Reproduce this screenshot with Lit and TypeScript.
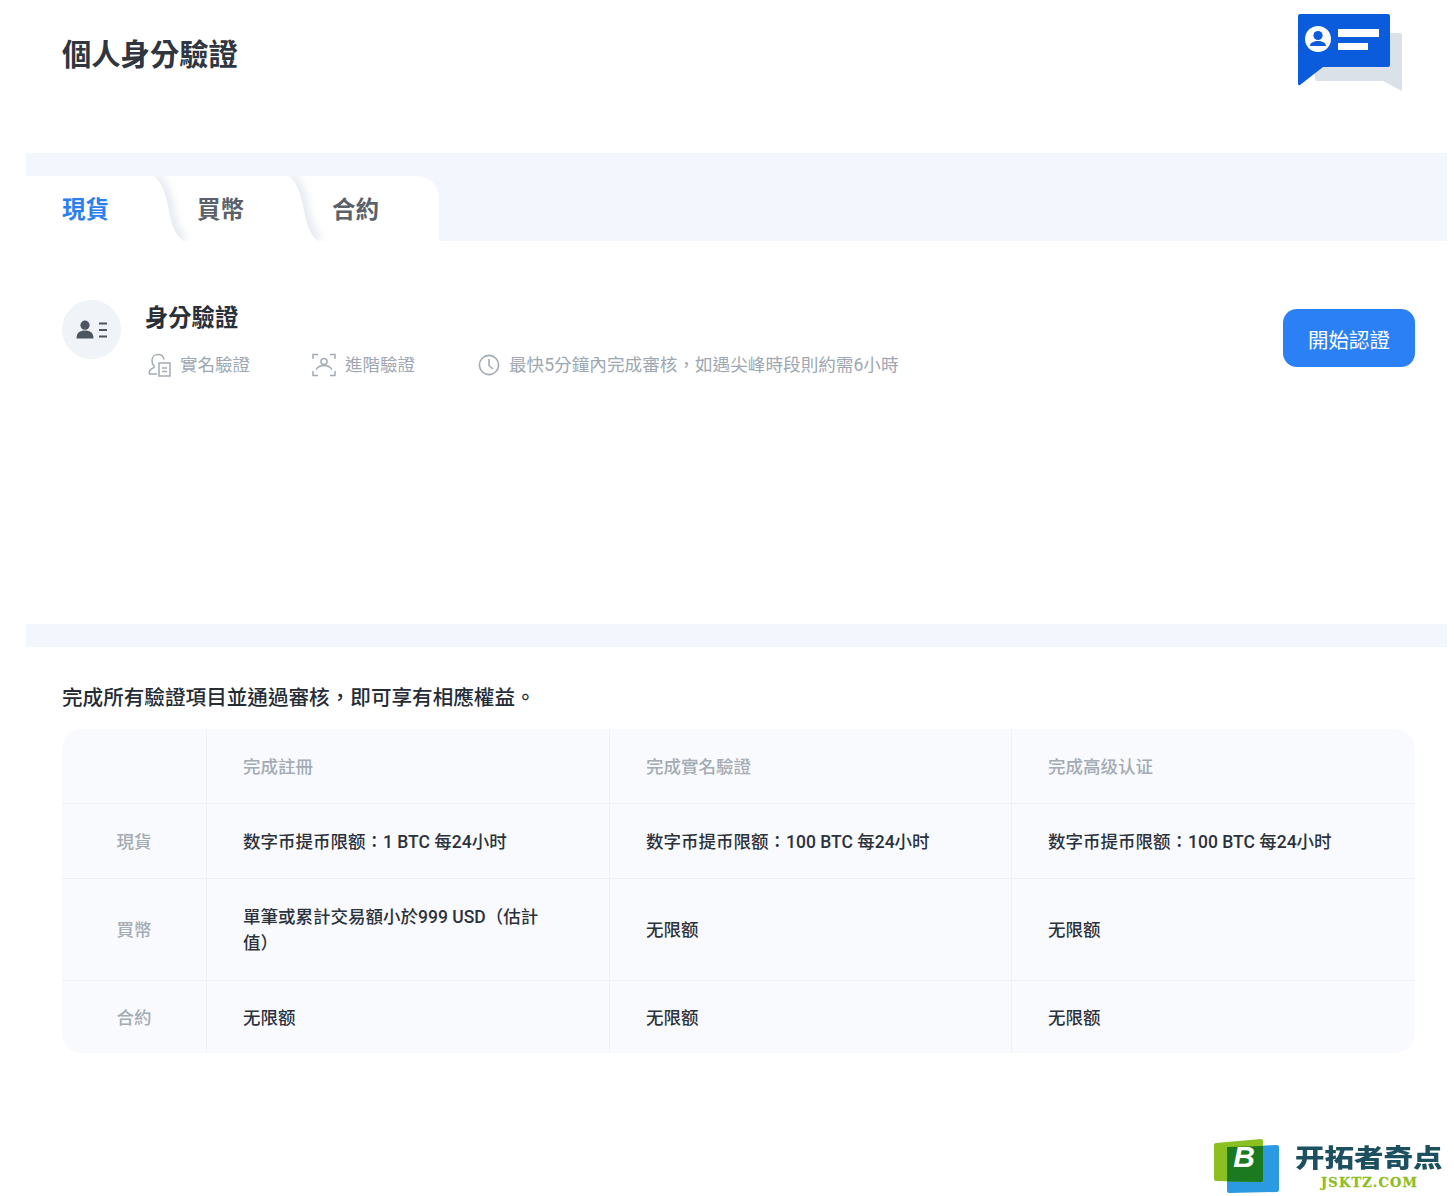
import { LitElement, html, css, svg } from "lit";
import { customElement } from "lit/decorators.js";

const CURVE = "M0 0 C8 4 12 16 15 30 C18 46 21 58 30 65";
const shade = svg`<svg class="shade" width="50" height="65" viewBox="0 0 50 65" aria-hidden="true">
  <defs>
    <clipPath id="sc"><path d="${CURVE} L50 65 L50 0 Z"/></clipPath>
    <filter id="sb" x="-50%" y="-20%" width="200%" height="140%"><feGaussianBlur stdDeviation="5"/></filter>
  </defs>
  <g clip-path="url(#sc)"><path d="${CURVE}" fill="none" stroke="#dfe4ec" stroke-width="9" filter="url(#sb)"/></g>
</svg>`;

const rows: [string, string, string, string][] = [
  ["現貨", "数字币提币限额：1 BTC 每24小时", "数字币提币限额：100 BTC 每24小时", "数字币提币限额：100 BTC 每24小时"],
  ["買幣", "單筆或累計交易額小於999 USD（估計值）", "无限额", "无限额"],
  ["合約", "无限额", "无限额", "无限额"],
];

@customElement("app-root")
export class AppRoot extends LitElement {
  static styles = css`
    :host { display: block; position: relative; width: 1454px; height: 1196px; overflow: hidden;
      background: #fff; font-family: Roboto, "Noto Sans CJK TC", "Noto Sans CJK SC", sans-serif; color: #262c35; }
    .header { height: 153px; box-sizing: border-box; padding: 0 52px 0 62px; display: flex; justify-content: space-between; align-items: flex-start; }
    h1 { margin: 36px 0 0; font-size: 29.3px; line-height: 38px; font-weight: 700; color: #2f3640; }
    .brand { margin-top: 13px; display: block; }
    .main { width: 1421px; margin-left: 26px; }
    .tabbar { height: 88px; background: #f3f6fc; display: flex; align-items: flex-end; }
    .tabs { display: flex; height: 65px; background: #fff; border-top-right-radius: 22px; }
    .tab { position: relative; width: 135px; box-sizing: border-box; padding: 17px 0 0 36px; font-size: 23.5px; line-height: 34px; font-weight: 700; color: #5a616a; }
    .tab:last-child { width: 143px; }
    .tab.on { color: #2b80ee; }
    .shade { position: absolute; left: -8px; top: 0; }
    .tab span { position: relative; }
    .verify { height: 383px; box-sizing: border-box; padding: 59px 32px 0 36px; display: flex; align-items: flex-start; }
    .avatar { width: 59px; height: 59px; border-radius: 50%; background: #f0f3f7; display: flex; align-items: center; justify-content: center; flex: none; }
    .info { margin-left: 24px; flex: 1; }
    h2 { margin: 0; padding-top: 1px; font-size: 23.3px; line-height: 34px; font-weight: 700; color: #2a3039; }
    .meta { display: flex; align-items: center; margin-top: 17px; font-size: 17.5px; line-height: 26px; color: #9ea7b2; }
    .meta div { display: flex; align-items: center; }
    .meta svg { flex: none; margin-right: 9px; }
    .m1 { margin-left: 3px; width: 164px; }
    .m2 { width: 166px; }
    .m3 { font-size: 17.62px; }
    button { all: unset; box-sizing: border-box; flex: none; width: 132px; height: 58px; margin-top: 9px; border-radius: 14px; background: #2b80f6; color: #fff; text-align: center; font-size: 20.5px; line-height: 64px; font-weight: 400; }
    .strip { height: 23px; background: #f3f6fc; }
    .benefits { padding: 36px 32px 0 36px; }
    .lead { margin: 0 0 16px; font-size: 20.6px; line-height: 30px; font-weight: 500; color: #262c35; }
    .table { display: grid; grid-template-columns: 144px 403px 402px 404px; border-radius: 20px; overflow: hidden; background: #f9fafd; font-size: 17.5px; font-weight: 500; color: #2b323c; }
    .cell { box-sizing: border-box; display: flex; align-items: center; padding: 2px 36px 0; line-height: 26px; border-left: 1px solid #edf0f5; border-top: 1px solid #edf0f5; height: 75px; }
    .cell.side { justify-content: center; padding: 2px 0 0; border-left: 0; color: #a3abb5; }
    .cell.head { color: #a3abb5; border-top: 0; height: 74px; padding-top: 1px; }
    .cell.corner { border-left: 0; }
    .cell.tall { height: 102px; padding-top: 0; }
    .cell.last { height: 73px; }
    .cell.wrap span { max-width: 310px; }
    .watermark { position: absolute; left: 1214px; top: 1138px; width: 236px; height: 56px; }
    .wm-icon { position: absolute; left: 0; top: 0; }
    .wm-b { position: absolute; left: 17px; top: 0; width: 26px; text-align: center; font: italic 700 30px/38px "Liberation Sans", sans-serif; color: #fff; }
    .wm-cn { position: absolute; left: 81px; top: -1px; font: 900 25px/38px "Noto Sans CJK SC", sans-serif; color: #1c4f60; white-space: nowrap; transform: scaleX(1.18); transform-origin: left center; }
    .wm-en { position: absolute; left: 107px; top: 35px; font: 700 13px/20px "DejaVu Serif", serif; letter-spacing: 1.2px; color: #8dbd22; white-space: nowrap; -webkit-text-stroke: 0.3px #8dbd22; }
  `;

  render() {
    return html`
      <header class="header">
        <h1>個人身分驗證</h1>
        <svg class="brand" width="104" height="78" viewBox="0 0 104 78" aria-hidden="true">
          <path d="M17 22 a2 2 0 0 1 2-2 H102 a2 2 0 0 1 2 2 V78 L85 68 H19 a2 2 0 0 1 -2-2 Z" fill="#dbe1e9"/>
          <path d="M2 1 H90 a2 2 0 0 1 2 2 V52 a2 2 0 0 1 -2 2 H25 L2 72 a1.5 1.5 0 0 1 -2-1 V3 a2 2 0 0 1 2-2 Z" fill="#0a5cdd"/>
          <circle cx="20" cy="26" r="13" fill="#fff"/>
          <circle cx="20" cy="22.5" r="4.6" fill="#0a5cdd"/>
          <path d="M12 33 C12 29 16 29 18 28 H22 C24 29 28 29 28 33 Z" fill="#0a5cdd"/>
          <rect x="40" y="16" width="41" height="8" fill="#fff"/>
          <rect x="40" y="30" width="30" height="7" fill="#fff"/>
        </svg>
      </header>
      <main class="main">
        <div class="tabbar">
          <div class="tabs">
            <div class="tab on"><span>現貨</span></div>
            <div class="tab">${shade}<span>買幣</span></div>
            <div class="tab">${shade}<span>合約</span></div>
          </div>
        </div>
        <section class="verify">
          <div class="avatar">
            <svg width="32" height="20" viewBox="0 0 32 20" aria-hidden="true">
              <circle cx="9" cy="5.2" r="4.6" fill="#4d5560"/>
              <path d="M0.5 18.5 C0.5 12.5 4 10.5 9 10.5 C14 10.5 17.5 12.5 17.5 18.5 Z" fill="#4d5560"/>
              <path d="M23 3.5 H31 M23 10 H31 M23 16.5 H31" stroke="#4d5560" stroke-width="2.2"/>
            </svg>
          </div>
          <div class="info">
            <h2>身分驗證</h2>
            <div class="meta">
              <div class="m1">
                <svg width="23" height="24" viewBox="0 0 23 24" fill="none" stroke="#a3acb6" stroke-width="1.5" aria-hidden="true">
                  <path d="M1 21 C1 17 3 15.5 6 14.5 V13 C4.5 11.5 4 10 4 7.5 C4 4 6.5 1.5 10 1.5 C13 1.5 15.5 3.5 16 6.5"/>
                  <path d="M1 21 H9"/><path d="M11 10 H22 V23 H11 Z"/><path d="M14 15 H19 M14 18.5 H19"/>
                </svg>
                <span>實名驗證</span>
              </div>
              <div class="m2">
                <svg width="24" height="24" viewBox="0 0 24 24" fill="none" stroke="#a3acb6" stroke-width="1.5" aria-hidden="true">
                  <path d="M1 6 V1.5 H6 M18 1.5 H23 V6 M1 18 V22.5 H6 M18 22.5 H23 V18"/>
                  <circle cx="12" cy="8.5" r="3"/>
                  <path d="M4 16.5 C6 13.5 9 12.5 12 12.5 C15 12.5 18 13.5 20 16.5"/>
                </svg>
                <span>進階驗證</span>
              </div>
              <div class="m3">
                <svg width="22" height="22" viewBox="0 0 22 22" fill="none" stroke="#a3acb6" stroke-width="1.6" aria-hidden="true">
                  <circle cx="11" cy="11" r="9.6"/><path d="M11 5 V11.5 L15 15"/>
                </svg>
                <span>最快5分鐘內完成審核，如遇尖峰時段則約需6小時</span>
              </div>
            </div>
          </div>
          <button>開始認證</button>
        </section>
        <div class="strip"></div>
        <section class="benefits">
          <p class="lead">完成所有驗證項目並通過審核，即可享有相應權益。</p>
          <div class="table">
            <div class="cell head corner"></div>
            <div class="cell head">完成註冊</div>
            <div class="cell head">完成實名驗證</div>
            <div class="cell head">完成高级认证</div>
            ${rows.map((r, i) => {
              const cls = i === 1 ? "tall" : i === 2 ? "last" : "";
              return html`
                <div class="cell side ${cls}">${r[0]}</div>
                <div class="cell wrap ${cls}"><span>${r[1]}</span></div>
                <div class="cell ${cls}"><span>${r[2]}</span></div>
                <div class="cell ${cls}"><span>${r[3]}</span></div>`;
            })}
          </div>
        </section>
      </main>
      <div class="watermark">
        <svg class="wm-icon" width="66" height="56" viewBox="0 0 66 56" aria-hidden="true">
          <path d="M13 9 L63 7 a2 2 0 0 1 2 2 V52 a2 2 0 0 1 -2 2 L15 55 a2 2 0 0 1 -2-2 Z" fill="#2b9ae2"/>
          <path d="M2 5 L47 1 a2 2 0 0 1 2 2 V42 a2 2 0 0 1 -2 2 L2 43 a2 2 0 0 1 -2-2 V7 a2 2 0 0 1 2-2 Z" fill="#8cbf20"/>
          <path d="M13 9 L49 8 V42 a2 2 0 0 1 -2 2 L13 43.6 Z" fill="#1b7a20"/>
        </svg>
        <span class="wm-b">B</span>
        <span class="wm-cn">开拓者奇点</span>
        <span class="wm-en">JSKTZ.COM</span>
      </div>
    `;
  }
}
